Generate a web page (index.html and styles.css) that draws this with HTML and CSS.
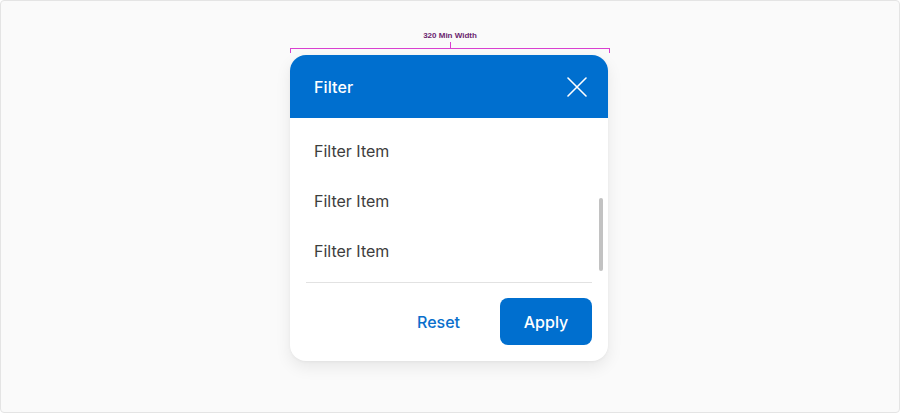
FILE: index.html
```html
<!DOCTYPE html>
<html lang="en">
<head>
<meta charset="utf-8">
<title>Filter</title>
<link rel="stylesheet" href="styles.css">
</head>
<body>
<div class="frame">
  <div class="measure">
    <div class="measure-label">320 Min Width</div>
    <div class="measure-bar"><span class="tick-mid"></span></div>
  </div>
  <div class="card">
    <div class="card-header">
      <span class="card-title">Filter</span>
      <svg class="close" width="20" height="20" viewBox="0 0 20 20" aria-hidden="true">
        <path d="M1 1 L19 19 M19 1 L1 19" stroke="#ffffff" stroke-width="1.6" stroke-linecap="round" fill="none"/>
      </svg>
    </div>
    <div class="card-body">
      <ul class="items">
        <li class="item">Filter Item</li>
        <li class="item">Filter Item</li>
        <li class="item">Filter Item</li>
      </ul>
      <span class="scroll-thumb"></span>
    </div>
    <div class="divider"></div>
    <div class="card-footer">
      <button class="btn btn-text">Reset</button>
      <button class="btn btn-primary">Apply</button>
    </div>
  </div>
</div>
</body>
</html>
```

FILE: styles.css
```css
* { box-sizing: border-box; }
html, body { margin: 0; padding: 0; }
body {
  width: 900px;
  height: 413px;
  background: #ffffff;
  font-family: Inter, "Noto Sans", "Liberation Sans", sans-serif;
}
.frame {
  width: 900px;
  height: 413px;
  background: #fafafa;
  border: 1px solid #e4e4e4;
  border-radius: 4px;
  display: flex;
  flex-direction: column;
  align-items: center;
  padding-top: 29px;
}
.measure {
  width: 320px;
  display: flex;
  flex-direction: column;
  align-items: center;
}
.measure-label {
  font-family: "Liberation Sans", Arial, sans-serif;
  font-weight: 700;
  font-size: 8px;
  line-height: 12px;
  color: #6a1f6f;
}
.measure-bar {
  position: relative;
  width: 320px;
  height: 5px;
  margin-top: 6px;
  border-top: 1px solid #d940d0;
  border-left: 1px solid #d940d0;
  border-right: 1px solid #d940d0;
}
.tick-mid {
  position: absolute;
  left: 159px;
  top: -7px;
  width: 1px;
  height: 6px;
  background: #d940d0;
}
.card {
  margin-top: 2px;
  margin-right: 2px;
  width: 318px;
  background: #ffffff;
  border-radius: 16px;
  overflow: hidden;
  box-shadow: 0 6px 16px rgba(0, 0, 0, 0.08), 0 1px 3px rgba(0, 0, 0, 0.04);
}
.card-header {
  height: 63px;
  background: #006fcf;
  display: flex;
  align-items: center;
  justify-content: space-between;
  padding: 0 21px 0 24px;
}
.card-title {
  color: #ffffff;
  font-size: 16px;
  font-weight: 500;
  letter-spacing: 0.1px;
}
.close { display: block; }
.card-body {
  position: relative;
  height: 164px;
  padding-top: 8px;
  overflow: hidden;
}
.items {
  list-style: none;
  margin: 0;
  padding: 0;
}
.item {
  height: 50px;
  display: flex;
  align-items: center;
  padding-left: 24px;
  font-size: 16px;
  color: #3d3d3d;
}
.scroll-thumb {
  position: absolute;
  right: 5px;
  top: 80px;
  width: 4px;
  height: 73px;
  border-radius: 2px;
  background: #c2c2c2;
}
.divider {
  height: 1px;
  margin: 0 16px;
  background: #e2e2e2;
}
.card-footer {
  display: flex;
  justify-content: flex-end;
  align-items: center;
  gap: 40px;
  padding: 15px 16px 16px;
}
.btn {
  font-family: Inter, "Noto Sans", "Liberation Sans", sans-serif;
  font-size: 16px;
  font-weight: 500;
  border: none;
  cursor: pointer;
}
.btn-text {
  background: none;
  color: #0a6fcc;
  padding: 0;
}
.btn-primary {
  width: 92px;
  height: 47px;
  background: #006fcf;
  color: #ffffff;
  border-radius: 8px;
}
```
